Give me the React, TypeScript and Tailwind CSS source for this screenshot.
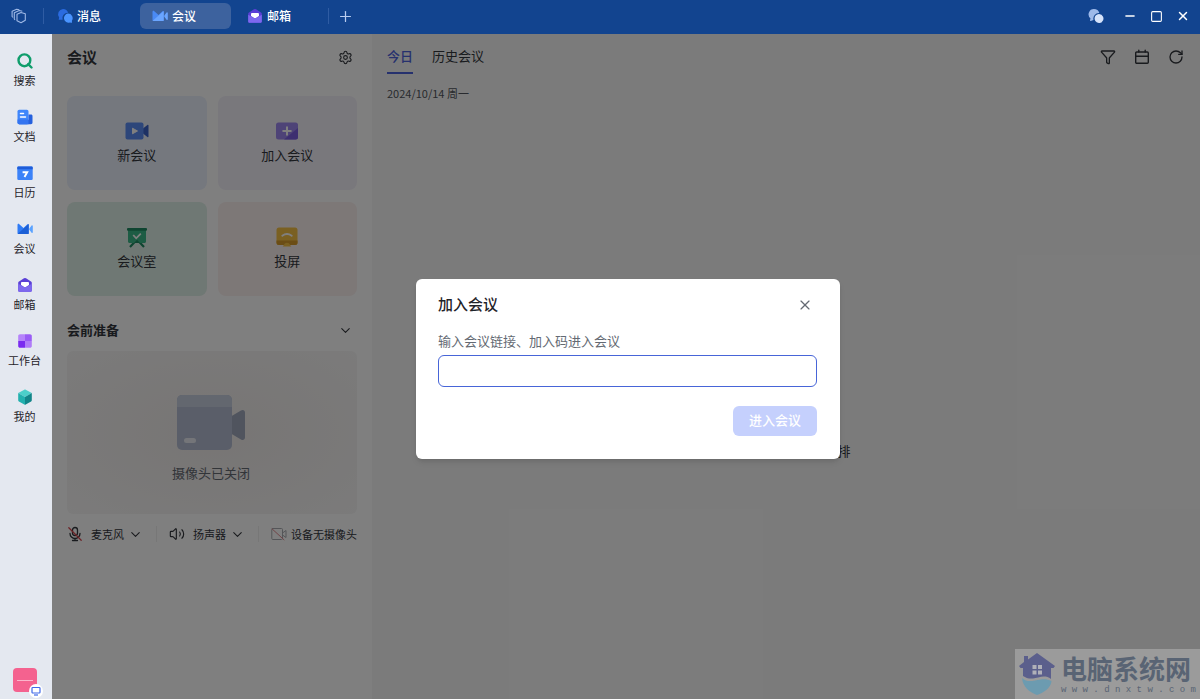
import React, { useState } from 'react';
import {
  ChevronDown,
  Funnel,
  Minus,
  Plus,
  RotateCw,
  Settings,
  Square,
  Volume2,
  X,
} from 'lucide-react';

type IconProps = { className?: string };

const ChatIcon = ({ className }: IconProps) => (
  <svg viewBox="0 0 16 16" className={className}>
    <path d="M6 1a5.500 5.500 0 0 1 5.200 3.800A5.400 5.400 0 0 0 5.600 11.800H2.300a.6.6 0 0 1-.5-.9l.4-1.400A5.300 5.300 0 0 1 6 1Z" fill="#2b6be0" />
    <path d="M11 5.600a4.600 4.600 0 0 1 3.900 7.100l.1 1.500c0 .4-.3.700-.7.600l-1.500-.2A4.600 4.600 0 1 1 11 5.600Z" fill="#4a94ff" />
  </svg>
);

const AssistantIcon = ({ className }: IconProps) => (
  <svg viewBox="0 0 16 16" className={className}>
    <path d="M6 1a5.500 5.500 0 0 1 5.300 4.100A5.600 5.600 0 0 0 5.500 12l-2.700 1c-.5.1-.8-.2-.7-.7l.3-2A5.300 5.300 0 0 1 6 1Z" fill="#9db9ea" />
    <path d="M11 6a4.500 4.500 0 0 1 3.200 7.600l-.8 1c-.3.300-.7.300-1 .2A4.500 4.500 0 1 1 11 6Z" fill="#d6e3fb" />
  </svg>
);

const MeetingIcon = ({ className }: IconProps) => (
  <svg viewBox="0 0 16 16" className={className}>
    <path d="M.5 4c0-1 1-1.500 1.800-.8L6.500 7l4-3.800c.6-.5 1.200-.2 1.200.6v8.400c0 .5-.4.9-.9.9H1.500a1 1 0 0 1-1-1Z" fill="#2f7bf5" />
    <path d="M.5 13.100 11.700 3v9.200c0 .5-.4.900-.9.900Z" fill="#1c5fd6" />
    <path d="M15.800 5v6.200c0 .7-.7 1-1.200.5L12.500 9a1.400 1.400 0 0 1 0-1.800l2.100-2.700c.5-.5 1.200-.2 1.200.5Z" fill="#5aa2ff" />
  </svg>
);

const MeetingTabIcon = ({ className }: IconProps) => (
  <svg viewBox="0 0 16 16" className={className}>
    <path d="M.5 4c0-1 1-1.500 1.800-.8L6.500 7l4-3.800c.6-.5 1.200-.2 1.200.6v8.400c0 .5-.4.9-.9.9H1.500a1 1 0 0 1-1-1Z" fill="#4a8af5" />
    <path d="M.5 13.100 11.700 3v9.200c0 .5-.4.900-.9.900Z" fill="#6aa5ff" />
    <path d="M15.800 5v6.200c0 .7-.7 1-1.200.5L12.500 9a1.400 1.400 0 0 1 0-1.800l2.100-2.700c.5-.5 1.200-.2 1.200.5Z" fill="#6aa5ff" />
  </svg>
);

const MailIcon = ({ className }: IconProps) => (
  <svg viewBox="0 0 16 16" className={className}>
    <path d="M7 1.300a2 2 0 0 1 2 0l5 3.100c.5.300.8.800.8 1.400v7.400c0 .9-.6 1.600-1.500 1.600H2.700c-.9 0-1.500-.7-1.500-1.600V5.800c0-.6.3-1.100.8-1.400Z" fill="#5a3fd6" />
    <path d="M4 6.200c0-.7.500-1.200 1.200-1.200h5.600c.7 0 1.200.5 1.200 1.200V8l-4 2.500L4 8Z" fill="#fff" />
    <path d="m1.200 6.800 6 3.500c.5.300 1.100.3 1.600 0l6-3.500v6.400c0 .9-.6 1.600-1.500 1.600H2.700c-.9 0-1.500-.7-1.500-1.600Z" fill="#7d68ee" />
  </svg>
);

const SearchIcon = ({ className }: IconProps) => (
  <svg viewBox="0 0 16 16" className={className} fill="none" stroke="#0f9d6b" strokeWidth="2.400" strokeLinecap="round">
    <circle cx="7.400" cy="7.300" r="5.900" />
    <path d="m11.200 11.200 3.300 3.300" />
  </svg>
);

const DocIcon = ({ className }: IconProps) => (
  <svg viewBox="0 0 16 16" className={className}>
    <rect x=".5" y=".8" width="11" height="14.400" rx="1.600" fill="#3f86fb" />
    <path d="M11.500 5.500h2.600c.8 0 1.400.6 1.400 1.400v6.700c0 .9-.7 1.600-1.600 1.600H2.100V11h9.400Z" fill="#2560dd" />
    <path d="M.5 10.500h11v4.700H2.100A1.600 1.600 0 0 1 .5 13.600Z" fill="#3474f0" />
    <path d="M3.500 4.600h3M3.500 8h5" stroke="#fff" strokeWidth="1.500" strokeLinecap="round" />
  </svg>
);

const CalendarAppIcon = ({ className }: IconProps) => (
  <svg viewBox="0 0 16 16" className={className}>
    <rect x=".3" y="1.500" width="15.400" height="13.500" rx="1.200" fill="#3b82f8" />
    <path d="M.3 2.700c0-.7.500-1.200 1.200-1.200h13c.7 0 1.200.5 1.200 1.200v1.600H.3Z" fill="#1e5cd8" />
    <path d="M5.600 7.200h4.600L7.500 12" fill="none" stroke="#fff" strokeWidth="1.900" />
  </svg>
);

const WorkbenchIcon = ({ className }: IconProps) => (
  <svg viewBox="0 0 16 16" className={className}>
    <path d="M3 1.200h5V8H1.200V3c0-1 .8-1.800 1.800-1.800Z" fill="#b583fa" />
    <path d="M8 1.200h5c1 0 1.800.8 1.800 1.800v5H8Z" fill="#9a5cf5" />
    <path d="M1.200 8H8v6.800H3c-1 0-1.800-.8-1.800-1.800Z" fill="#7a2bf0" />
    <path d="M8 8h6.800v5c0 1-.8 1.800-1.800 1.800H8Z" fill="#b07cf8" />
  </svg>
);

const CubeIcon = ({ className }: IconProps) => (
  <svg viewBox="0 0 16 16" className={className}>
    <path d="M7.300.7c.4-.3 1-.3 1.400 0l6.100 3.400L8 8 1.200 4.100Z" fill="#4ccfca" />
    <path d="M1.200 4.100 8 8v7.700c-.3 0-.5-.1-.7-.2l-5.400-3.100a1.400 1.400 0 0 1-.7-1.200Z" fill="#22b0ae" />
    <path d="M14.800 4.100 8 8v7.700c.3 0 .5-.1.7-.2l5.400-3.100c.4-.3.7-.7.7-1.200Z" fill="#128589" />
  </svg>
);

const NewMeetingIcon = ({ className }: IconProps) => (
  <svg viewBox="0 0 24 24" className={className}>
    <path d="M18 9.500 22.400 6c.5-.4 1.100-.1 1.100.5v11c0 .6-.6.9-1.100.5L18 14.500Z" fill="#3a62c8" />
    <rect x=".5" y="3.500" width="18" height="17" rx="2" fill="#5b8cf5" />
    <path d="M7.500 9.200v5.600l5-2.800Z" fill="#fff" stroke="#fff" strokeLinejoin="round" />
  </svg>
);

const JoinMeetingIcon = ({ className }: IconProps) => (
  <svg viewBox="0 0 24 24" className={className}>
    <rect x="1" y="3.500" width="22" height="17" rx="2.500" fill="#9c86ee" />
    <path d="M23 9v9a2.500 2.500 0 0 1-2.500 2.500H9Z" fill="#7a5fe0" />
    <path d="M12 8.200v7.600M8.200 12h7.600" stroke="#fff" strokeWidth="2" strokeLinecap="round" />
  </svg>
);

const RoomIcon = ({ className }: IconProps) => (
  <svg viewBox="0 0 24 24" className={className}>
    <path d="M12 14.500 5 22M12 14.500l7 7.500" stroke="#1f8a62" strokeWidth="2.200" />
    <path d="M3 5h18v11.500c0 .8-.7 1.500-1.500 1.500h-15c-.8 0-1.500-.7-1.500-1.500Z" fill="#3ab888" />
    <path d="m9 18 3-3.200 3 3.200Z" fill="#1f8a62" />
    <rect x="2" y="3" width="20" height="2.800" rx="1" fill="#1f8a62" />
    <path d="m8.200 10 3 3.300 4.600-4.600" fill="none" stroke="#fff" strokeWidth="1.800" />
  </svg>
);

const CastIcon = ({ className }: IconProps) => (
  <svg viewBox="0 0 24 24" className={className}>
    <rect x="1.500" y="2.500" width="21" height="17.500" rx="2.500" fill="#f5c044" />
    <path d="M1.500 15.500h21v2a2.500 2.500 0 0 1-2.500 2.500H4a2.500 2.500 0 0 1-2.500-2.500Z" fill="#d69a2a" />
    <path d="M7 21.500c1-.2 1.400-.7 1.800-1.600a3.500 3.500 0 0 1 6.400 0c.4.900.8 1.400 1.800 1.600Z" fill="#f5c044" />
    <path d="M7.300 10.700c2.800-2 6.600-2 9.400 0" fill="none" stroke="#fff" strokeWidth="2" strokeLinecap="round" />
  </svg>
);

const MicOffIcon = ({ className }: IconProps) => (
  <svg viewBox="0 0 16 16" className={className} fill="none" stroke="currentColor" strokeWidth="1.300" strokeLinecap="round">
    <rect x="5.500" y="1.500" width="5" height="8" rx="2.500" />
    <path d="M3 7.500a5 5 0 0 0 10 0M8 12.500v2M5.500 14.500h5" />
    <path d="m1.800 1.800 12.400 12.400" stroke="#d9474f" />
  </svg>
);

const CameraOffIcon = ({ className }: IconProps) => (
  <svg viewBox="0 0 16 16" className={className} fill="none" stroke="#a9abb0" strokeLinecap="round" strokeLinejoin="round">
    <rect x=".8" y="2.500" width="10.700" height="11" rx="1" />
    <path d="m11.500 7 3.500-2.500v7L11.500 9" />
    <path d="m1 2.800 12 11" stroke="#e08a90" />
  </svg>
);

const DateIcon = ({ className }: IconProps) => (
  <svg viewBox="0 0 16 16" className={className} fill="none" stroke="currentColor" strokeWidth="1.400" strokeLinecap="round">
    <rect x="1.700" y="3" width="12.600" height="11.300" rx="1" />
    <path d="M1.700 7.300h12.600M4.800 1.200V3M11.200 1.200V3" />
  </svg>
);

const TabsIcon = ({ className }: IconProps) => (
  <svg viewBox="0 0 16 16" className={className} fill="none" stroke="currentColor" strokeWidth="1.100" strokeLinejoin="round">
    <path d="m10 4.500 4.300 1.200v6.500L10 14.800l-4-2V6.200Z" />
    <path d="M4 11.800 3.300 11V4.800l5-2.300 3 .8" />
    <path d="m2 9.500-.9-1V3.200l4.600-2 2.600.6" />
  </svg>
);

const CameraArt = ({ className }: IconProps) => (
  <svg viewBox="0 0 70 56" className={className}>
    <path d="M54 22 65 15.500c2-1.200 4-.2 4 2v25c0 2.200-2 3.200-4 2L54 38Z" fill="#a0a9bd" />
    <rect x="1" y="0" width="55" height="55" rx="5" fill="#b4bdd2" />
    <path d="M1 12h55V5a5 5 0 0 0-5-5H6a5 5 0 0 0-5 5Z" fill="#c6cedf" />
    <rect x="8" y="43" width="12" height="5" rx="2.500" fill="#e8ebf2" />
  </svg>
);

const WatermarkLogo = ({ className }: IconProps) => (
  <svg viewBox="0 0 36 42" className={className}>
    <path d="M18 0 36 13l-1.500 2H32v11c-6-5-13-1-18-.5-4 .4-7-.5-10-2.500v-8H1.500L0 13 5 9V3h4v3.500Z" fill="#5b5f8c" />
    <path d="M3 25c4 3.500 8 3.500 13 2.500 6-1.200 11-2.500 16.500.5C32 35 25 39.500 18 42 10 39 4 34 3 25Z" fill="#6c9bb0" />
    <path d="M13.500 12h4v4h-4Zm5.500 0h4v4h-4Zm-5.500 5.500h4v4h-4Zm5.500 0h4v4h-4Z" fill="#b0b0b8" />
  </svg>
);

const navItems = [
  { label: '搜索', icon: SearchIcon },
  { label: '文档', icon: DocIcon },
  { label: '日历', icon: CalendarAppIcon },
  { label: '会议', icon: MeetingIcon },
  { label: '邮箱', icon: MailIcon },
  { label: '工作台', icon: WorkbenchIcon },
  { label: '我的', icon: CubeIcon },
];

const windowTabs = [
  { label: '消息', icon: ChatIcon },
  { label: '会议', icon: MeetingTabIcon },
  { label: '邮箱', icon: MailIcon },
];

const actions = [
  { label: '新会议', icon: NewMeetingIcon, bg: 'bg-[#eaf0fc]' },
  { label: '加入会议', icon: JoinMeetingIcon, bg: 'bg-[#f3f0f9]' },
  { label: '会议室', icon: RoomIcon, bg: 'bg-[#dff0e8]' },
  { label: '投屏', icon: CastIcon, bg: 'bg-[#faf0ef]' },
];

const TitleBar = () => {
  const [active, setActive] = useState(1);

  return (
    <header className="flex h-[34px] shrink-0 items-center bg-[#12448f] pb-0.5 text-white">
      <button aria-label="标签页" className="flex w-[43px] justify-center pr-1.5 text-[#9fb9e6]">
        <TabsIcon className="size-4" />
      </button>
      <span className="mr-px h-4 w-px bg-[#2f5ca3]" />
      <nav className="flex gap-1">
        {windowTabs.map((tab, index) => (
          <button
            key={tab.label}
            onClick={() => setActive(index)}
            className={`flex h-[26px] w-[91px] items-center gap-1 rounded-md px-3 text-xs font-medium ${index === active ? 'bg-[#3d629e]' : ''}`}
          >
            <tab.icon className="size-4" />
            {tab.label}
          </button>
        ))}
      </nav>
      <span className="ml-0.5 h-4 w-px bg-[#2f5ca3]" />
      <button aria-label="新标签页" className="ml-2 text-[#b9cdf0]">
        <Plus size={17} strokeWidth={1.750} />
      </button>
      <div className="ml-auto flex items-center gap-[13px] pr-2.5">
        <button aria-label="助手" className="mr-1.5">
          <AssistantIcon className="size-4" />
        </button>
        <button aria-label="最小化"><Minus size={14} strokeWidth={2.500} /></button>
        <button aria-label="最大化"><Square size={13} strokeWidth={2} /></button>
        <button aria-label="关闭"><X size={14} strokeWidth={2.500} /></button>
      </div>
    </header>
  );
};

const SideNav = () => (
  <aside className="flex w-[52px] shrink-0 flex-col items-center bg-[#e4e8f0] pt-[17px] pr-[3px]">
    <nav className="flex flex-col gap-[19px]">
      {navItems.map(item => (
        <a key={item.label} href="#" className="flex w-[48px] flex-col items-center gap-px text-[#1f2329]">
          <span className="flex h-5 items-center">
            <item.icon className="size-4" />
          </span>
          <span className="text-[11px] leading-4">{item.label}</span>
        </a>
      ))}
    </nav>
    <div className="relative mt-auto mb-[7px] flex size-6 items-center justify-center rounded-sm bg-[#f4628f]">
      <span className="h-px w-4 bg-[#fbb6cb]" />
      <span className="absolute -right-1.5 -bottom-1.5 flex size-3.5 items-center justify-center rounded-full bg-white">
        <svg viewBox="0 0 10 10" className="size-2.5" fill="none" stroke="#4069e8" strokeWidth="1.200">
          <rect x="1" y="1.500" width="8" height="5.500" rx=".8" />
          <path d="M3 9h4" />
        </svg>
      </span>
    </div>
  </aside>
);

const MeetingPanel = ({ onJoin }: { onJoin: () => void }) => (
  <section className="w-80 shrink-0 bg-white px-[15px] text-[#33363c]">
    <div className="flex h-[46px] items-center justify-between">
      <h1 className="text-[15px] font-bold">会议</h1>
      <button aria-label="设置" className="mr-1">
        <Settings size={15} strokeWidth={1.750} />
      </button>
    </div>

    <div className="mt-4 grid grid-cols-2 gap-x-[11px] gap-y-3">
      {actions.map(action => (
        <button
          key={action.label}
          onClick={action.label === '加入会议' ? onJoin : undefined}
          className={`flex h-[94px] flex-col items-center justify-center gap-0.5 rounded-lg pb-0.5 ${action.bg}`}
        >
          <action.icon className="size-6" />
          <span className="text-[13px] leading-5">{action.label}</span>
        </button>
      ))}
    </div>

    <div className="mt-[15px] flex h-10 items-center justify-between pb-0.5">
      <h2 className="text-[13px] font-bold">会前准备</h2>
      <button aria-label="收起" className="mr-1"><ChevronDown size={15} strokeWidth={1.750} /></button>
    </div>

    <div className="flex h-[163px] flex-col items-center justify-center gap-3 rounded-md bg-radial from-[#efebe9] to-[#f7f6f6] pt-3 pr-0.5">
      <CameraArt className="h-[56px] w-[70px]" />
      <p className="text-[13px] leading-5 text-[#646a73]">摄像头已关闭</p>
    </div>

    <div className="flex h-10 items-center justify-between text-[11px]">
      <button className="flex items-center">
        <MicOffIcon className="mr-2 size-4" />
        麦克风
        <ChevronDown size={15} strokeWidth={1.750} className="ml-1" />
      </button>
      <span className="h-4 w-px bg-[#eeeeef]" />
      <button className="flex items-center">
        <Volume2 size={16} strokeWidth={1.750} className="mr-2" />
        扬声器
        <ChevronDown size={15} strokeWidth={1.750} className="ml-1" />
      </button>
      <span className="h-4 w-px bg-[#eeeeef]" />
      <span className="flex items-center gap-1">
        <CameraOffIcon className="size-4" />
        设备无摄像头
      </span>
    </div>
  </section>
);

const Schedule = () => {
  const [tab, setTab] = useState('今日');

  return (
    <section className="flex min-w-0 flex-1 flex-col bg-[#f7f7f7] pr-4 pl-[15px] text-[#33363c]">
      <div className="flex h-10 justify-between">
        <div className="flex gap-[19px] text-[13px]">
          {['今日', '历史会议'].map(name => (
            <button
              key={name}
              onClick={() => setTab(name)}
              className={`border-b-2 pt-1.5 ${tab === name ? 'border-[#4d62dc] font-medium text-[#4d62dc]' : 'border-transparent'}`}
            >
              {name}
            </button>
          ))}
        </div>
        <div className="flex items-center gap-[18px] pt-1.5">
          <button aria-label="筛选"><Funnel size={16} strokeWidth={2} /></button>
          <button aria-label="日期"><DateIcon className="size-4" /></button>
          <button aria-label="刷新"><RotateCw size={16} strokeWidth={2} /></button>
        </div>
      </div>
      <p className="flex h-[38px] items-center text-[11px] text-[#50555c]">2024/10/14 周一</p>
      <div className="flex flex-1 items-center justify-center pt-[90px] text-[13px]">今天暂无任何会议安排</div>
    </section>
  );
};

const JoinDialog = ({ onClose }: { onClose: () => void }) => {
  const [code, setCode] = useState('');

  return (
    <div className="absolute inset-0 flex items-center justify-center bg-black/50 pt-1 pl-1">
      <form
        role="dialog"
        aria-labelledby="join-title"
        onSubmit={e => e.preventDefault()}
        className="flex w-[424px] flex-col rounded-md bg-white pt-3.5 pr-[23px] pb-[23px] pl-[22px] shadow-md"
      >
        <div className="flex h-6 items-center justify-between">
          <h2 id="join-title" className="text-[15px] font-medium">加入会议</h2>
          <button type="button" aria-label="关闭" onClick={onClose} className="mr-1 text-[#646a73]">
            <X size={16} strokeWidth={1.750} />
          </button>
        </div>
        <label htmlFor="join-code" className="mt-3.5 text-[13px] leading-5 text-[#646a73]">
          输入会议链接、加入码进入会议
        </label>
        <input
          id="join-code"
          value={code}
          onChange={e => setCode(e.target.value)}
          className="mt-1 h-8 rounded-md border border-[#4765d8] px-3 text-[13px] outline-none"
        />
        <button
          type="submit"
          className="mt-[19px] h-[30px] self-end rounded-md bg-[#c5d0fd] px-4 pb-0.5 text-[13px] font-medium text-white"
        >
          进入会议
        </button>
      </form>
    </div>
  );
};

const Watermark = () => (
  <div className="absolute right-0 bottom-0 flex h-[50px] items-center gap-1.5 bg-[#9b9b9b] pr-1 pl-1">
    <WatermarkLogo className="h-[42px] w-9" />
    <div className="text-[#596474]">
      <p className="text-[26px] leading-8 font-bold">电脑系统网</p>
      <p className="font-['Liberation_Mono'] text-[9px] leading-3">w w w . d n x t w . c o m</p>
    </div>
  </div>
);

export default function App() {
  const [joining, setJoining] = useState(true);

  return (
    <div className="relative flex h-screen flex-col overflow-hidden font-['Noto_Sans_CJK_SC',sans-serif] text-[#1f2329]">
      <TitleBar />
      <div className="flex min-h-0 flex-1">
        <SideNav />
        <main className="relative flex min-w-0 flex-1">
          <MeetingPanel onJoin={() => setJoining(true)} />
          <Schedule />
          {joining && <JoinDialog onClose={() => setJoining(false)} />}
        </main>
      </div>
      <Watermark />
    </div>
  );
}
